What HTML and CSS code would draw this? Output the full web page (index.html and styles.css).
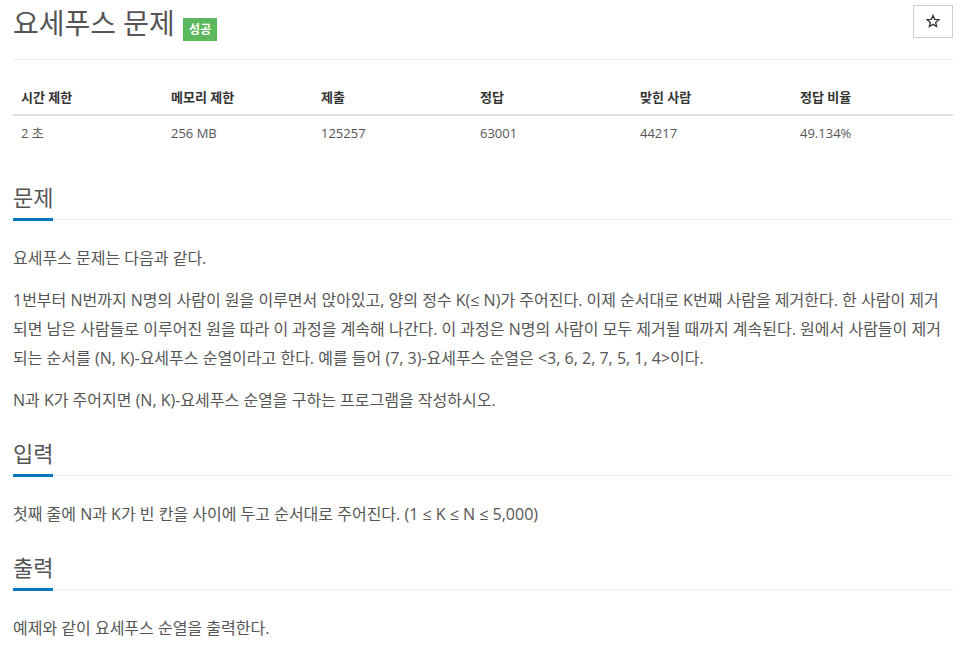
FILE: index.html
```html
<!DOCTYPE html>
<html lang="ko">
<head>
<meta charset="utf-8">
<title>요세푸스 문제</title>
<link rel="stylesheet" href="styles.css">
</head>
<body>
<div class="page">
  <div class="page-header">
    <h1 class="title">요세푸스 문제 <span class="badge">성공</span></h1>
    <button class="star-btn" type="button" aria-label="즐겨찾기">
      <svg class="star-icon" width="14" height="14" viewBox="0 0 24 24"><path d="M12 2.5l2.9 6.6 7.1.6-5.4 4.7 1.6 7-6.2-3.7-6.2 3.7 1.6-7L2 9.7l7.1-.6z" fill="none" stroke="#333" stroke-width="2.2" stroke-linejoin="miter"/></svg>
    </button>
  </div>

  <table class="info">
    <colgroup>
      <col class="c1"><col class="c2"><col class="c3"><col class="c4"><col class="c5"><col class="c6">
    </colgroup>
    <thead>
      <tr><th>시간 제한</th><th>메모리 제한</th><th>제출</th><th>정답</th><th>맞힌 사람</th><th>정답 비율</th></tr>
    </thead>
    <tbody>
      <tr><td>2 초</td><td>256 MB</td><td>125257</td><td>63001</td><td>44217</td><td>49.134%</td></tr>
    </tbody>
  </table>

  <section class="section">
    <div class="headline"><h2>문제</h2></div>
    <div class="text">
      <p>요세푸스 문제는 다음과 같다.</p>
      <p>1번부터 N번까지 N명의 사람이 원을 이루면서 앉아있고, 양의 정수 K(≤ N)가 주어진다. 이제 순서대로 K번째 사람을 제거한다. 한 사람이 제거되면 남은 사람들로 이루어진 원을 따라 이 과정을 계속해 나간다. 이 과정은 N명의 사람이 모두 제거될 때까지 계속된다. 원에서 사람들이 제거되는 순서를 (N, K)-요세푸스 순열이라고 한다. 예를 들어 (7, 3)-요세푸스 순열은 &lt;3, 6, 2, 7, 5, 1, 4&gt;이다.</p>
      <p>N과 K가 주어지면 (N, K)-요세푸스 순열을 구하는 프로그램을 작성하시오.</p>
    </div>
  </section>

  <section class="section">
    <div class="headline"><h2>입력</h2></div>
    <div class="text">
      <p>첫째 줄에 N과 K가 빈 칸을 사이에 두고 순서대로 주어진다. (1 ≤ K ≤ N ≤ 5,000)</p>
    </div>
  </section>

  <section class="section">
    <div class="headline"><h2>출력</h2></div>
    <div class="text">
      <p>예제와 같이 요세푸스 순열을 출력한다.</p>
    </div>
  </section>
</div>
</body>
</html>
```

FILE: styles.css
```css
html, body {
  margin: 0;
  padding: 0;
  background: #fff;
}

body {
  font-family: "Open Sans", "Noto Sans CJK KR", sans-serif;
  color: #555;
}

.page {
  width: 940px;
  margin-left: 13px;
}

.page-header {
  display: flex;
  justify-content: space-between;
  align-items: flex-start;
  border-bottom: 1px solid #eee;
  height: 59px;
}

.title {
  margin: 0;
  font-size: 28px;
  font-weight: 400;
  line-height: 46px;
  color: #555;
}

.badge {
  display: inline-block;
  background: #5cb85c;
  color: #fff;
  font-size: 12px;
  font-weight: 700;
  line-height: 23px;
  padding: 0 6px;
  margin-left: 1px;
  vertical-align: 0;
}

.star-btn {
  margin-top: 5px;
  width: 40px;
  height: 33px;
  padding: 0;
  border: 1px solid #ccc;
  background: #fff;
  display: flex;
  align-items: center;
  justify-content: center;
}

.star-icon {
  display: block;
  margin-top: -1px;
}

.info {
  margin-top: 20px;
  width: 940px;
  border-collapse: collapse;
  table-layout: fixed;
  font-size: 13px;
}

.c1, .c2 { width: 150px; }
.c3 { width: 159px; }
.c4, .c5 { width: 160px; }
.c6 { width: 161px; }

.info th, .info td {
  text-align: left;
  padding: 8px;
  line-height: 18px;
}

.info th {
  color: #333;
  font-weight: 700;
  border-bottom: 2px solid #ddd;
}

.info td {
  color: #555;
}

.section {
  margin-top: 36px;
}

.section + .section {
  margin-top: 27px;
}

.headline {
  border-bottom: 1px dotted #dde3ea;
  margin-bottom: 24px;
}

.headline h2 {
  display: inline-block;
  margin: 0 0 -2px;
  padding-bottom: 9px;
  font-size: 22px;
  font-weight: 400;
  line-height: 23px;
  color: #555;
  border-bottom: 3px solid #0076c0;
}

.text p {
  margin: 0 0 13px;
  font-size: 16px;
  line-height: 29px;
}
```
